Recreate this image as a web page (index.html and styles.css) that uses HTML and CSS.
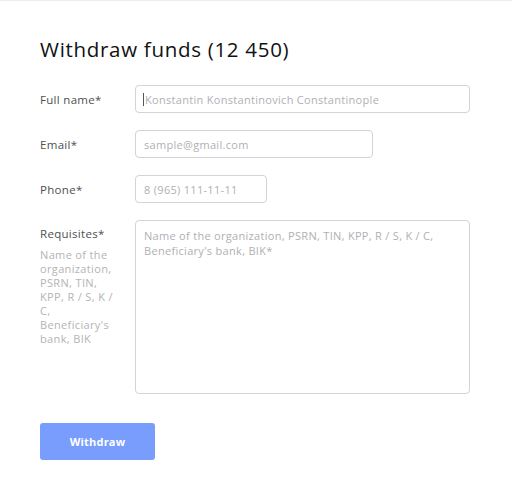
FILE: index.html
```html
<!DOCTYPE html>
<html>
<head>
<meta charset="utf-8">
<link rel="stylesheet" href="styles.css">
</head>
<body>
<div class="card">
  <h1 class="title">Withdraw funds (12 450)</h1>
  <form class="form">
    <div class="row">
      <label class="label">Full name*</label>
      <div class="field field-full"><span class="caret"></span><span class="ph">Konstantin Konstantinovich Constantinople</span></div>
    </div>
    <div class="row">
      <label class="label">Email*</label>
      <div class="field field-email"><span class="ph">sample@gmail.com</span></div>
    </div>
    <div class="row">
      <label class="label">Phone*</label>
      <div class="field field-phone"><span class="ph">8 (965) 111-11-11</span></div>
    </div>
    <div class="row row-top">
      <div class="label-col">
        <label class="label">Requisites*</label>
        <p class="hint">Name of the organization, PSRN, TIN, KPP, R / S, K / C, Beneficiary's bank, BIK</p>
      </div>
      <div class="field field-area"><span class="ph">Name of the organization, PSRN, TIN, KPP, R / S, K / C, Beneficiary's bank, BIK*</span></div>
    </div>
    <div class="actions">
      <button type="button" class="btn">Withdraw</button>
    </div>
  </form>
</div>
</body>
</html>
```
FILE: styles.css
```css
* { box-sizing: border-box; }
html, body { margin: 0; padding: 0; background: #fff; }
body { font-family: "Open Sans", "Liberation Sans", sans-serif; color: #222; }
.card {
  width: 512px;
  height: 492px;
  border-top: 1px solid #ececec;
  padding: 34px 0 0 40px;
}
.title {
  margin: 0;
  font-size: 20.5px;
  font-weight: 400;
  color: #111;
  line-height: 28px;
  letter-spacing: 0.7px;
}
.form {
  margin-top: 22px;
  display: flex;
  flex-direction: column;
  gap: 17px;
}
.row {
  display: flex;
  align-items: center;
}
.row-top { align-items: flex-start; }
.label {
  width: 95px;
  flex: none;
  font-size: 11.5px;
  color: #4f4f4f;
  letter-spacing: 0.3px;
}
.label-col { width: 95px; flex: none; padding-top: 6px; }
.label-col .label { display: block; line-height: 16px; }
.hint {
  margin: 6px 0 0;
  width: 76px;
  font-size: 11px;
  line-height: 14px;
  color: #b4b4b4;
  letter-spacing: 0.35px;
}
.field {
  height: 28px;
  border: 1px solid #d3d3db;
  border-radius: 4px;
  padding: 0 8px;
  display: flex;
  align-items: center;
  font-size: 11px;
  letter-spacing: 0.3px;
  background: #fff;
}
.field-full { width: 335px; padding-left: 7px; }
.field-email { width: 238px; }
.field-phone { width: 132px; }
.field-area {
  width: 335px;
  height: 174px;
  align-items: flex-start;
  padding-top: 7px;
  line-height: 15px;
}
.caret {
  width: 1px;
  height: 13px;
  background: #555;
  margin-right: 1px;
}
.ph { color: #b0b0b4; }
.actions { margin-top: 12px; }
.btn {
  width: 115px;
  height: 37px;
  border: none;
  border-radius: 3px;
  background: #789dfd;
  color: #fff;
  font-family: "Open Sans", "Liberation Sans", sans-serif;
  font-weight: 700;
  font-size: 11px;
  letter-spacing: 0.2px;
}
```
